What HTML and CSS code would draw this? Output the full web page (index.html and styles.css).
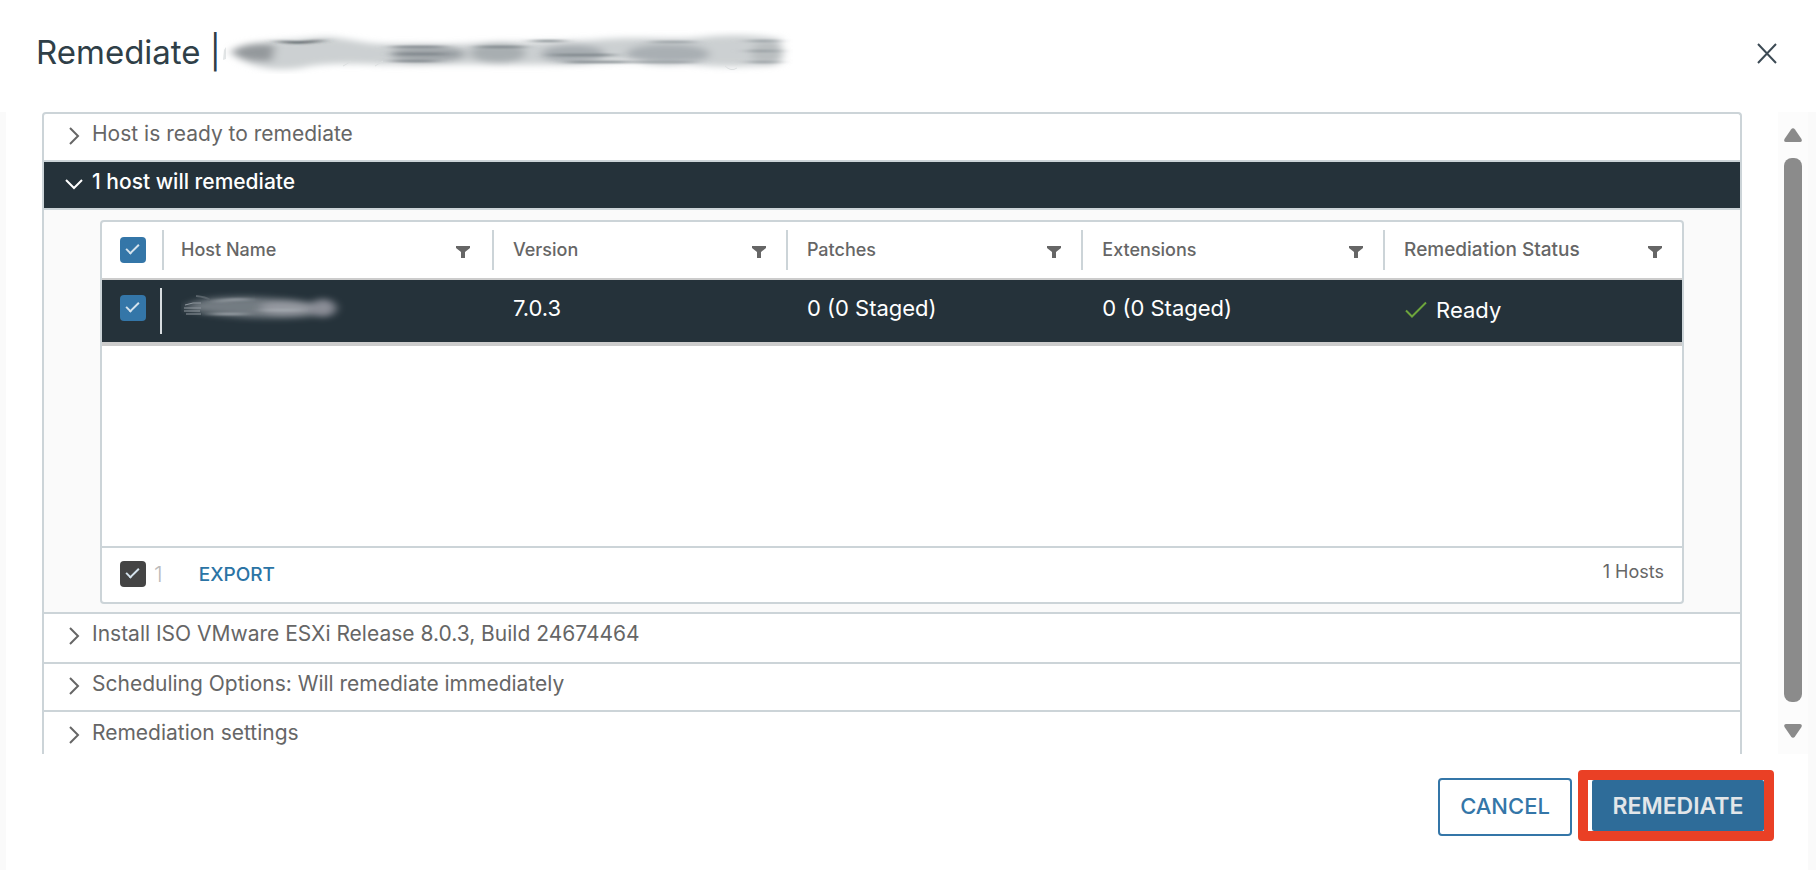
FILE: index.html
```html
<!DOCTYPE html>
<html lang="en">
<head>
<meta charset="utf-8">
<title>Remediate</title>
<link rel="stylesheet" href="styles.css">
</head>
<body>
<svg class="defs" aria-hidden="true">
  <defs>
    <symbol id="chevron" viewBox="0 0 20 20"><path d="M6 2l8 8-8 8" fill="none" stroke="currentColor" stroke-width="2"/></symbol>
    <symbol id="filter" viewBox="0 0 14 12"><path d="M0 0h14v2L9 6v6H5V6L0 2z" fill="currentColor"/></symbol>
    <filter id="soft" x="-10%" y="-50%" width="120%" height="200%"><feGaussianBlur stdDeviation="5 3"/></filter>
    <filter id="streak" x="-10%" y="-50%" width="120%" height="200%"><feGaussianBlur stdDeviation="8 1"/></filter>
  </defs>
</svg>
<div class="dialog" role="dialog" aria-labelledby="title">
  <header class="dialog-header">
    <h1 class="title" id="title">Remediate |</h1>
    <svg class="masked-name" width="570" height="44" viewBox="0 0 570 44" aria-hidden="true">
      <path d="M1 20l2-3v12l-3 1z" fill="#e3e6e7"/>
      <g filter="url(#soft)">
        <path d="M8 22C16 11 50 12 90 8c30-3 40 5 70 6l60 1c60-3 100-3 150-5 50-5 80 2 120-4 30-2 50 0 68 3v24c-25 4-60 5-90 1-40-6-80-1-120 0-60 2-120-1-160 1-50 0-80-4-110 3-30 4-54-1-70-16z" fill="#ccd0d2"/>
        <path d="M8 22q15-11 44-7l-3 16q-30 2-41-9z" fill="#94999c"/>
        <ellipse cx="205" cy="24" rx="38" ry="8" fill="#9ca2a6"/>
        <ellipse cx="275" cy="23" rx="28" ry="10" fill="#a8aeb1"/>
        <ellipse cx="350" cy="24" rx="32" ry="9" fill="#a6acb0"/>
        <ellipse cx="445" cy="24" rx="42" ry="10" fill="#a9afb3"/>
        <ellipse cx="544" cy="23" rx="16" ry="12" fill="#b9bec0"/>
      </g>
      <g filter="url(#streak)" fill="none" stroke-width="2">
        <path d="M56 11q20 4 42-1" stroke="#40484d"/>
        <path d="M170 17h50M175 24h46M170 31h42" stroke="#7b8388"/>
        <path d="M310 11h30M330 25h60M345 32h60M256 17h44" stroke="#7c8488"/>
        <path d="M430 12h40M410 32h60M526 11h28M526 32h28M526 21h28" stroke="#959ca0"/>
      </g>
      <path d="M120 36q4-2 8-5M152 36l8-5M502 36q6 6 12 2" stroke="#dcdfe0" fill="none"/>
    </svg>
    <button class="close" type="button" aria-label="Close">
      <svg width="22" height="22" viewBox="0 0 22 22"><path d="M2 2l18 19M20 2l-18 19" stroke="#3d4b55" stroke-width="2" fill="none"/></svg>
    </button>
  </header>

  <div class="dialog-body">
    <div class="accordion">
      <button class="panel-head" type="button" aria-expanded="false"><svg class="chev"><use href="#chevron"/></svg><span>Host is ready to remediate</span></button>
      <button class="panel-head open" type="button" aria-expanded="true"><svg class="chev"><use href="#chevron"/></svg><span>1 host will remediate</span></button>
      <div class="panel-content">
        <div class="grid">
          <table class="hosts">
            <colgroup><col class="c-check"><col class="c-name"><col class="c-version"><col class="c-patches"><col class="c-ext"><col></colgroup>
            <thead>
              <tr>
                <th><input class="check" type="checkbox" checked aria-label="Select all hosts"></th>
                <th><div class="head"><span>Host Name</span><button class="filter" type="button" aria-label="Filter Host Name"><svg><use href="#filter"/></svg></button></div></th>
                <th><div class="head"><span>Version</span><button class="filter" type="button" aria-label="Filter Version"><svg><use href="#filter"/></svg></button></div></th>
                <th><div class="head"><span>Patches</span><button class="filter" type="button" aria-label="Filter Patches"><svg><use href="#filter"/></svg></button></div></th>
                <th><div class="head"><span>Extensions</span><button class="filter" type="button" aria-label="Filter Extensions"><svg><use href="#filter"/></svg></button></div></th>
                <th><div class="head"><span>Remediation Status</span><button class="filter" type="button" aria-label="Filter Remediation Status"><svg><use href="#filter"/></svg></button></div></th>
              </tr>
            </thead>
            <tbody>
              <tr>
                <td><input class="check" type="checkbox" checked aria-label="Select host"></td>
                <td>
                  <svg class="masked-host" width="180" height="36" viewBox="0 0 180 36" aria-hidden="true">
                    <g filter="url(#soft)">
                      <path d="M3 18q10-10 55-11 50 0 98 10-10 11-60 11-60 0-93-10z" fill="#737b82"/>
                      <ellipse cx="105" cy="18" rx="26" ry="7" fill="#9599a0"/>
                      <ellipse cx="142" cy="18" rx="13" ry="9" fill="#8a8d96"/>
                    </g>
                    <g filter="url(#streak)" fill="none" stroke-width="2">
                      <path d="M34 12q18-4 34-2M84 20h34M30 24h34" stroke="#a5abb1"/>
                    </g>
                    <path d="M4 15q8-3 16-2M3 18h17M3 21h16M5 24h15" stroke="#8f979e" fill="none"/>
                    <path d="M15 6q10 1 14 4" stroke="#59636a" stroke-width="2" fill="none"/>
                  </svg>
                </td>
                <td>7.0.3</td>
                <td>0 (0 Staged)</td>
                <td>0 (0 Staged)</td>
                <td><div class="status"><svg width="24" height="18" viewBox="0 0 24 18"><path d="M2 9.500l6 6L22 1.500" fill="none" stroke="#6da53c" stroke-width="2"/></svg><span>Ready</span></div></td>
              </tr>
            </tbody>
          </table>
          <div class="grid-space"></div>
          <div class="grid-footer">
            <label class="selected"><input class="check dark" type="checkbox" checked><span>1</span></label>
            <button class="export" type="button">EXPORT</button>
            <span class="total">1 Hosts</span>
          </div>
        </div>
      </div>
      <button class="panel-head tall" type="button" aria-expanded="false"><svg class="chev"><use href="#chevron"/></svg><span>Install ISO VMware ESXi Release 8.0.3, Build 24674464</span></button>
      <button class="panel-head" type="button" aria-expanded="false"><svg class="chev"><use href="#chevron"/></svg><span>Scheduling Options: Will remediate immediately</span></button>
      <button class="panel-head" type="button" aria-expanded="false"><svg class="chev"><use href="#chevron"/></svg><span>Remediation settings</span></button>
    </div>
    <div class="scrollbar" aria-hidden="true">
      <svg width="18" height="14" viewBox="0 0 18 14"><path d="M7 1.500Q9-1 11 1.500L17.500 11Q18.500 14 16 14H2Q-.5 14 .5 11z" fill="#8b8b8b"/></svg>
      <div class="thumb"></div>
      <svg width="18" height="14" viewBox="0 0 18 14"><path d="M7 12.500Q9 15 11 12.500L17.500 3Q18.500 0 16 0H2Q-.5 0 .5 3z" fill="#8b8b8b"/></svg>
    </div>
  </div>

  <footer class="dialog-footer">
    <button class="btn" type="button">CANCEL</button>
    <div class="highlight"><button class="btn primary" type="button">REMEDIATE</button></div>
  </footer>
</div>
</body>
</html>
```
FILE: styles.css
```css
* { box-sizing: border-box; }

body {
  margin: 0;
  background: #fff;
  color: #666;
  font: 22px/28px Inter, "Liberation Sans", sans-serif;
}

button {
  margin: 0;
  padding: 0;
  border: 0;
  background: none;
  color: inherit;
  font: inherit;
  cursor: pointer;
}

svg { display: block; flex: none; }

.defs { position: absolute; width: 0; height: 0; }

.dialog {
  display: flex;
  flex-direction: column;
  height: 100vh;
  background:
    linear-gradient(#fafafa, #fafafa) 0 112px / 6px 100% no-repeat,
    linear-gradient(#fafafa, #fafafa) 100% 112px / 8px 100% no-repeat,
    #fff;
}

.dialog-header {
  display: flex;
  align-items: center;
  flex: none;
  height: 112px;
  padding: 0 38px 8px 36px;
}

.title {
  margin: 0;
  color: #2f3f48;
  font-size: 33px;
  line-height: 40px;
  font-weight: 400;
}

.masked-name { margin-left: 2px; }

.close { margin-left: auto; padding-top: 2px; }

.dialog-body {
  display: flex;
  flex: 1;
  min-height: 0;
  overflow: hidden;
  padding: 0 8px 0 42px;
}

.accordion {
  flex: 1;
  min-width: 0;
  height: max-content;
  min-height: 100%;
  border: 2px solid #ccd4d8;
  border-bottom: 0;
  border-radius: 4px 4px 0 0;
}

.panel-head {
  display: flex;
  align-items: center;
  gap: 8px;
  width: 100%;
  height: 48px;
  padding: 0 20px 6px;
  border-bottom: 2px solid #ccd4d8;
  font-size: 21px;
  text-align: left;
}

.panel-head:last-child { border-bottom: 0; }
.panel-head.tall { height: 50px; padding-bottom: 8px; }

.panel-head.open {
  background: #25323a;
  color: #fff;
  font-weight: 500;
}

.chev { width: 20px; height: 20px; margin-top: 4px; }
.open .chev { transform: rotate(90deg); }

.panel-content {
  padding: 10px 56px 8px;
  border-bottom: 2px solid #ccd4d8;
  background: #fafafa;
}

.grid {
  overflow: hidden;
  border: 2px solid #ccd4d8;
  border-radius: 4px;
  background: #fff;
}

.hosts {
  width: 100%;
  table-layout: fixed;
  border-collapse: separate;
  border-spacing: 0;
}

.c-check { width: 62px; }
.c-name { width: 330px; }
.c-version { width: 18.6%; }
.c-patches { width: 18.7%; }
.c-ext { width: 19.1%; }

.hosts th {
  height: 58px;
  padding: 0 22px 0 19px;
  border-bottom: 2px solid #ccc;
  background: linear-gradient(#ccd4d8, #ccd4d8) 100% 8px / 2px 40px no-repeat;
  font-size: 18px;
  line-height: 24px;
  font-weight: 500;
  text-align: left;
}

.hosts th:last-child {
  padding-right: 20px;
  background: none;
  font-size: 19px;
}

.hosts td {
  height: 66px;
  padding: 0 18px 6px 19px;
  border-bottom: 4px solid #ccc;
  background: #25323a;
  color: #fff;
}

.hosts td:first-child {
  background: linear-gradient(#d8dde0, #d8dde0) 58px 8px / 2px 46px no-repeat, #25323a;
}

.hosts th:first-child,
.hosts td:first-child { padding-right: 0; padding-left: 18px; }

.hosts th:nth-child(2),
.hosts td:nth-child(2) { padding-left: 17px; padding-right: 24px; }

.head { display: flex; align-items: center; justify-content: space-between; }

.filter svg { width: 14px; height: 12px; margin-top: 4px; color: #666; }

.check {
  display: block;
  appearance: none;
  flex: none;
  width: 26px;
  height: 26px;
  margin: 0;
  border-radius: 4px;
  background: #3476a8;
}

.check::before {
  content: "";
  display: block;
  box-sizing: border-box;
  width: 13px;
  height: 7px;
  margin: 7px 0 0 6px;
  border: solid #d5e3ed;
  border-width: 0 0 2px 2px;
  transform: rotate(-45deg);
}

.check.dark { background: #444; }

.status { display: flex; align-items: center; gap: 8px; padding-top: 4px; }

.grid-space { height: 200px; }

.grid-footer {
  display: flex;
  align-items: center;
  height: 56px;
  padding: 0 18px 2px;
  border-top: 2px solid #ccd4d8;
  font-size: 18px;
}

.selected {
  display: flex;
  align-items: center;
  gap: 8px;
  color: #bbb;
  font-size: 22px;
  font-weight: 300;
}

.export {
  margin-left: 36px;
  padding-top: 2px;
  color: #2b74a5;
  font-size: 19px;
  font-weight: 500;
}

.total { margin-left: auto; padding-bottom: 4px; }

.scrollbar {
  display: flex;
  flex-direction: column;
  align-items: center;
  flex: none;
  width: 30px;
  margin-left: 36px;
  padding: 16px 0;
  background: #fcfcfc;
}

.thumb {
  flex: 1;
  width: 18px;
  margin: 16px 0 22px;
  border-radius: 8px;
  background: #8b8b8b;
}

.dialog-footer {
  display: flex;
  align-items: flex-start;
  justify-content: flex-end;
  gap: 6px;
  flex: none;
  height: 116px;
  padding: 16px 42px 0;
}

.btn {
  min-width: 134px;
  height: 58px;
  margin-top: 8px;
  padding: 0 18px 2px;
  border: 2px solid #3476a8;
  border-radius: 4px;
  color: #3476a8;
  font-weight: 500;
}

.highlight {
  padding-left: 4px;
  border: 10px solid #ea4025;
  border-radius: 4px;
  background: #fff;
}

.btn.primary {
  display: block;
  min-width: 172px;
  height: 51px;
  margin: 0;
  padding: 0 20px;
  border: 0;
  border-radius: 2px;
  background: #2e6c99;
  color: #e2e6e9;
  font-size: 23px;
  font-weight: 600;
}
```
